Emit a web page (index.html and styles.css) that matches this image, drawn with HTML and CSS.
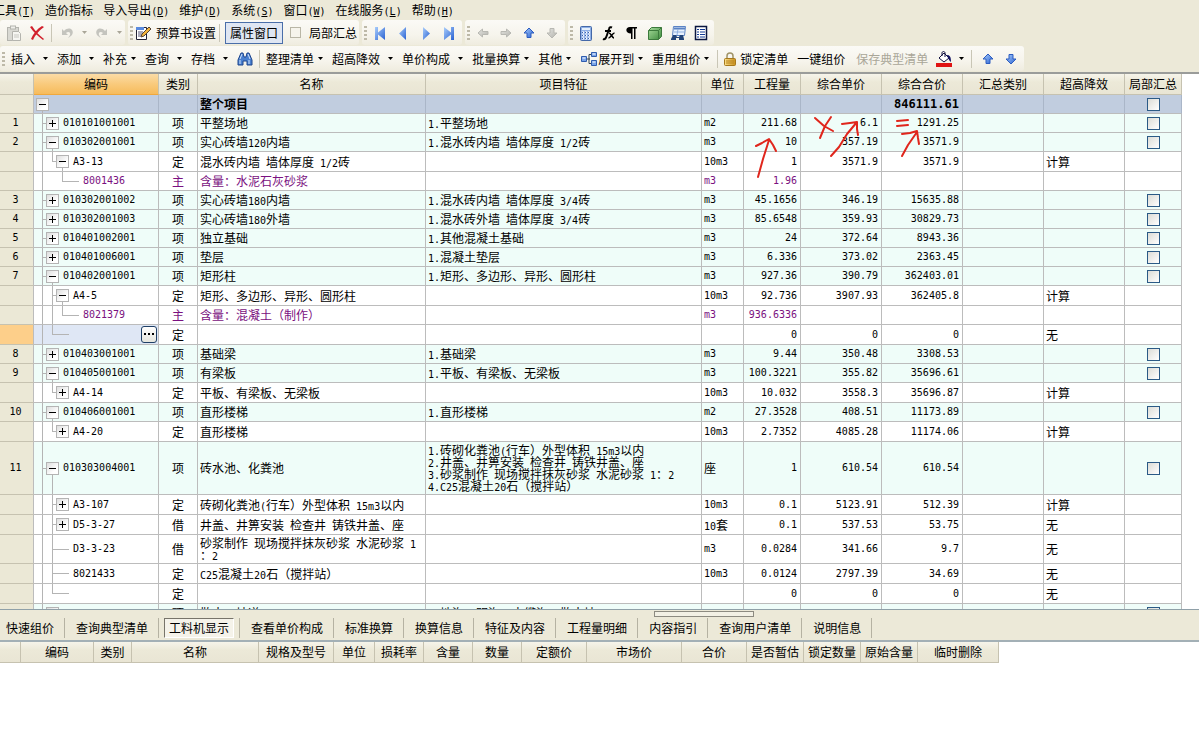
FILE: index.html
```html
<!DOCTYPE html>
<html lang="zh-CN">
<head>
<meta charset="utf-8">
<title>预算书</title>
<link rel="stylesheet" href="styles.css">
</head>
<body>
<svg class="defs" width="0" height="0" aria-hidden="true">
  <defs>
    <linearGradient id="blue" x1="0" y1="0" x2="1" y2="1"><stop offset="0" stop-color="#a9cdfb"/><stop offset="1" stop-color="#2a62d2"/></linearGradient>
    <linearGradient id="gray" x1="0" y1="0" x2="1" y2="1"><stop offset="0" stop-color="#e4e4e0"/><stop offset="1" stop-color="#b4b4ae"/></linearGradient>
    <linearGradient id="green" x1="0" y1="0" x2="1" y2="1"><stop offset="0" stop-color="#a8dc9c"/><stop offset="1" stop-color="#3c8a3c"/></linearGradient>
    <linearGradient id="gold" x1="0" y1="0" x2="1" y2="0"><stop offset="0" stop-color="#fbe08a"/><stop offset="1" stop-color="#c8901c"/></linearGradient>
    <symbol id="caret" viewBox="0 0 5 3"><path d="M0 0h5L2.500 3z"/></symbol>
    <symbol id="up" viewBox="0 0 16 16"><path d="M8 3l5 5h-3v4.500H6V8H3z"/></symbol>
    <symbol id="down" viewBox="0 0 16 16"><path d="M8 13l5-5h-3V3.500H6V8H3z"/></symbol>
    <symbol id="undo" viewBox="0 0 16 16"><path d="M3 4v6h6L7 8c2-2 5-1 4 2-.5 1-1 2-2 3 4-2 6-5 4-8-2-2-5-2-8 1z"/></symbol>
  </defs>
</svg>

<nav class="menu">
  <a href="#">工具<span class="n">(<u>T</u>)</span></a>
  <a href="#">造价指标</a>
  <a href="#">导入导出<span class="n">(<u>D</u>)</span></a>
  <a href="#">维护<span class="n">(<u>D</u>)</span></a>
  <a href="#">系统<span class="n">(<u>S</u>)</span></a>
  <a href="#">窗口<span class="n">(<u>W</u>)</span></a>
  <a href="#">在线服务<span class="n">(<u>L</u>)</span></a>
  <a href="#">帮助<span class="n">(<u>H</u>)</span></a>
</nav>

<div class="bars">
  <div class="bar">
    <div class="group lead">
      <button class="ib" aria-label="粘贴"><svg width="16" height="16" viewBox="0 0 16 16"><rect x="1.500" y="2.500" width="11" height="13" fill="#d9d9d3" stroke="#b4b4ae"/><rect x="4.500" y="1" width="5" height="3" fill="#efefea" stroke="#b4b4ae"/><path d="M6.500 6.500h6l2 2v7h-8z" fill="#f6f6f2" stroke="#b4b4ae"/><path d="M8 10h5M8 12h5" stroke="#c8c8c2"/></svg></button>
      <button class="ib" aria-label="删除"><svg width="16" height="16" viewBox="0 0 16 16"><path d="M1 2l2-1c3 5 7 9 12 13l-1 1C9 11 4 7 1 2zM13 1l2 1C11 5 6 10 4 15l-2-1C4 9 8 4 13 1z" fill="#d2202c"/></svg></button>
      <span class="sep"></span>
      <button class="ib" aria-label="撤销"><svg width="16" height="16" fill="#c4c4be"><use href="#undo"/></svg></button>
      <button class="ca dim" aria-label="撤销列表"><svg width="5" height="3"><use href="#caret"/></svg></button>
      <button class="ib" aria-label="重做"><svg class="flip" width="16" height="16" fill="#c4c4be"><use href="#undo"/></svg></button>
      <button class="ca dim" aria-label="重做列表"><svg width="5" height="3"><use href="#caret"/></svg></button>
    </div>
    <div class="group">
      <span class="grip"></span>
      <button class="tb"><svg width="18" height="16" viewBox="0 0 18 16"><path d="M2.500 2.500h10v12h-10z" fill="#fff" stroke="#223"/><path d="M2 2h8v3H2z" fill="#5a8ade"/><path d="M4 7h5M4 9h4M4 11h3" stroke="#557"/><path d="M15 2l2 2-7 7-3 1 1-3z" fill="#f2b33a" stroke="#543"/></svg><span>预算书设置</span></button>
      <span class="sep"></span>
      <button class="tb pressed">属性窗口</button>
      <label class="opt"><input type="checkbox" class="opt-box"><span>局部汇总</span></label>
    </div>
    <div class="group">
      <span class="grip"></span>
      <button class="ib" aria-label="首条"><svg width="16" height="16" viewBox="0 0 16 16" fill="url(#blue)"><path d="M3 2h3v5.500L13 2v13L6 9.500V15H3z"/></svg></button>
      <button class="ib" aria-label="上一条"><svg width="16" height="16" viewBox="0 0 16 16" fill="url(#blue)"><path d="M4 8.500L11 2v13z"/></svg></button>
      <button class="ib" aria-label="下一条"><svg width="16" height="16" viewBox="0 0 16 16" fill="url(#blue)"><path d="M5 2l7 6.500L5 15z"/></svg></button>
      <button class="ib" aria-label="末条"><svg width="16" height="16" viewBox="0 0 16 16" fill="url(#blue)"><path d="M13 2h-3v5.500L3 2v13l7-5.500V15h3z"/></svg></button>
    </div>
    <div class="group">
      <span class="grip"></span>
      <button class="ib" aria-label="左移"><svg width="16" height="16" viewBox="0 0 16 16" fill="url(#gray)" stroke="#b8b8b2"><path d="M3 8l4.500-4v2.500H13v3H7.500V12z"/></svg></button>
      <button class="ib" aria-label="右移"><svg width="16" height="16" viewBox="0 0 16 16" fill="url(#gray)" stroke="#b8b8b2"><path d="M13 8L8.500 4v2.500H3v3h5.500V12z"/></svg></button>
      <button class="ib" aria-label="上移"><svg width="16" height="16" fill="url(#blue)" stroke="#2c5cc0"><use href="#up"/></svg></button>
      <button class="ib" aria-label="下移"><svg width="16" height="16" fill="url(#gray)" stroke="#b8b8b2"><use href="#down"/></svg></button>
    </div>
    <div class="group">
      <span class="grip"></span>
      <button class="ib" aria-label="计算器"><svg width="16" height="16" viewBox="0 0 16 16"><rect x="2.500" y="1.500" width="11" height="14" rx="1" fill="#8fb0e6" stroke="#4468a8"/><path d="M4 3h8v2H4z" fill="#e4effc"/><path d="M4 7.500h8M4 10.500h8M4 13.500h8" stroke="#fff" stroke-width="2" stroke-dasharray="2 1"/><path d="M4 7.500h8M4 10.500h8M4 13.500h8" stroke="#3c62ac" stroke-dasharray="1 2"/></svg></button>
      <button class="ib" aria-label="函数"><svg width="16" height="16" viewBox="0 0 16 16" fill="none" stroke="#000"><path d="M2 14c2 1 3-1 4-4l2-6c.5-2 2-2 3-1.500M4 6h6" stroke-width="2"/><path d="M8 8c2 0 3 5 5 5M13.500 8c-2 0-4 5-6 5" stroke-width="1.500"/></svg></button>
      <button class="ib" aria-label="段落"><svg width="16" height="16" viewBox="0 0 16 16"><path d="M13 2v1.500h-1.500V14H10V3.500H8.500V14H7V8.500C1 8.500 1 2 6 2z"/></svg></button>
      <button class="ib" aria-label="立方体"><svg width="16" height="16" viewBox="0 0 16 16" stroke="#3c7a3c"><path d="M1.500 5.500l3-3h10v9l-3 3h-10z" fill="url(#green)"/><path d="M1.500 5.500h10v9M11.500 5.500l3-3" fill="none"/></svg></button>
      <button class="ib" aria-label="查找表"><svg width="16" height="16" viewBox="0 0 16 16"><path d="M3.500 1.500h12l-1 9h-12z" fill="#e8f1fd" stroke="#5b83c4"/><path d="M4 3.500h11" stroke="#5b83c4" stroke-width="2"/><path d="M4 7h10M8 4l-1 6" stroke="#8fb0e0"/><path d="M1 14l2-4h3l1 2h2l1-2h3l1 4v1H9v-2H6v2H1z" fill="#234478"/></svg></button>
      <button class="ib" aria-label="列表"><svg width="16" height="16" viewBox="0 0 16 16"><path d="M2.500 1.500h11v13h-11z" fill="#fff" stroke="#0a1640" stroke-width="1.500"/><path d="M4 4.500h2M4 7h2M4 9.500h2M4 12h2M7 4.500h5M7 7h5M7 9.500h5M7 12h5" stroke="#123a94"/></svg></button>
    </div>
  </div>

  <div class="bar">
    <div class="group wide">
      <span class="grip"></span>
      <button class="db far">插入<svg width="5" height="3"><use href="#caret"/></svg></button>
      <button class="db far">添加<svg width="5" height="3"><use href="#caret"/></svg></button>
      <button class="db">补充<svg width="5" height="3"><use href="#caret"/></svg></button>
      <button class="db far">查询<svg width="5" height="3"><use href="#caret"/></svg></button>
      <button class="db far">存档<svg width="5" height="3"><use href="#caret"/></svg></button>
      <button class="find" aria-label="查找"><svg width="16" height="16" viewBox="0 0 16 16" fill="#4a80d0" stroke="#1c448c"><path d="M1 9l3-7h2l1 4h2l1-4h2l3 7v5h-5v-4H6v4H1z"/><path d="M3 9v4M12 9v4M5 3L3 8M11 3l2 5" stroke="#cfe2fb"/></svg></button>
      <span class="sep"></span>
      <button class="db">整理清单<svg width="5" height="3"><use href="#caret"/></svg></button>
      <button class="db far">超高降效<svg width="5" height="3"><use href="#caret"/></svg></button>
      <button class="db far">单价构成<svg width="5" height="3"><use href="#caret"/></svg></button>
      <button class="db">批量换算<svg width="5" height="3"><use href="#caret"/></svg></button>
      <button class="db">其他<svg width="5" height="3"><use href="#caret"/></svg></button>
      <button class="db"><svg class="pic" width="18" height="16" viewBox="0 0 18 16"><path d="M6 8h4M9 3.500v9M9 3.500h2M9 12.500h2" stroke="#345" fill="none"/><g fill="#7aa4e8" stroke="#2f5cae"><path d="M1.500 5.500h5v5h-5z"/><path d="M11.500 1.500h5v4h-5z"/><path d="M11.500 9.500h5v5h-5z"/></g><path d="M2.500 7h3M12.500 3h3M12.500 11h3" stroke="#fff"/></svg>展开到<svg width="5" height="3"><use href="#caret"/></svg></button>
      <button class="db near">重用组价<svg width="5" height="3"><use href="#caret"/></svg></button>
      <span class="sep"></span>
      <button class="tb"><svg width="16" height="16" viewBox="0 0 16 16"><path d="M5 8V5c0-4 6-4 6 0v3" fill="none" stroke="#a09468" stroke-width="1.500"/><rect x="2.500" y="7.500" width="11" height="7" rx="1" fill="url(#gold)" stroke="#a6781c"/><path d="M4 10h8M4 12h8" stroke="#b98420"/></svg><span>锁定清单</span></button>
      <button class="tx">一键组价</button>
      <button class="tx" disabled>保存典型清单</button>
      <button class="db paint" aria-label="填充颜色"><svg class="pic" width="18" height="16" viewBox="0 0 18 16"><path d="M1 12h16v4H1z" fill="#e01414"/><path d="M4 7l5-5 5 5-5 4z" fill="#fff" stroke="#101040"/><path d="M7 5V2c0-2 3-2 3 0v4" fill="none" stroke="#101040"/><path d="M12 4c3 0 4 2 4 7-2-1-2-3-3-4z" fill="#101060"/></svg><svg width="5" height="3"><use href="#caret"/></svg></button>
      <span class="sep"></span>
      <button class="ib" aria-label="上移"><svg width="16" height="16" fill="url(#blue)" stroke="#2c5cc0"><use href="#up"/></svg></button>
      <button class="ib" aria-label="下移"><svg width="16" height="16" fill="url(#blue)" stroke="#2c5cc0"><use href="#down"/></svg></button>
    </div>
  </div>
</div>

<main class="sheet">
  <table class="grid">
    <colgroup><col class="w34"><col class="w125"><col class="w39"><col class="w228"><col><col class="w42"><col class="w57"><col class="w81"><col class="w81"><col class="w81"><col class="w81"><col class="w57"></colgroup>
    <thead>
      <tr><th></th><th class="hot">编码</th><th>类别</th><th>名称</th><th>项目特征</th><th>单位</th><th>工程量</th><th>综合单价</th><th>综合合价</th><th>汇总类别</th><th>超高降效</th><th>局部汇总</th></tr>
    </thead>
    <tbody>
      <tr class="total"><th></th><td class="code"><div class="tree"><button class="tw open" aria-label="折叠"></button></div></td><td></td><td>整个项目</td><td></td><td></td><td></td><td></td><td class="num">846111.61</td><td></td><td></td><td class="chk"><input type="checkbox" aria-label="局部汇总"></td></tr>
      <tr class="item"><th>1</th><td class="code"><div class="tree"><i class="tee"></i><button class="tw plus" aria-label="展开"></button><span>010101001001</span></div></td><td class="kind">项</td><td>平整场地</td><td><span class="n">1.</span>平整场地</td><td class="unit">m2</td><td class="num">211.68</td><td class="num">6.1</td><td class="num">1291.25</td><td></td><td></td><td class="chk"><input type="checkbox" aria-label="局部汇总"></td></tr>
      <tr class="item"><th>2</th><td class="code"><div class="tree"><i class="tee"></i><button class="tw open" aria-label="折叠"></button><span>010302001001</span></div></td><td class="kind">项</td><td>实心砖墙<span class="n">120</span>内墙</td><td><span class="n">1.</span>混水砖内墙&ensp;墙体厚度<span class="n"> 1/2</span>砖</td><td class="unit">m3</td><td class="num">10</td><td class="num">357.19</td><td class="num">3571.9</td><td></td><td></td><td class="chk"><input type="checkbox" aria-label="局部汇总"></td></tr>
      <tr class="norm"><th></th><td class="code"><div class="tree"><i class="bar-v"></i><i class="end"></i><button class="tw open" aria-label="折叠"></button><span>A3-13</span></div></td><td class="kind">定</td><td>混水砖内墙&ensp;墙体厚度<span class="n"> 1/2</span>砖</td><td></td><td class="unit">10m3</td><td class="num">1</td><td class="num">3571.9</td><td class="num">3571.9</td><td></td><td>计算</td><td></td></tr>
      <tr class="main"><th></th><td class="code"><div class="tree"><i class="bar-v"></i><i class="gap"></i><i class="end leaf"></i><span>8001436</span></div></td><td class="kind">主</td><td>含量<span class="c">：</span>水泥石灰砂浆</td><td></td><td class="unit">m3</td><td class="num">1.96</td><td></td><td></td><td></td><td></td><td></td></tr>
      <tr class="item"><th>3</th><td class="code"><div class="tree"><i class="tee"></i><button class="tw plus" aria-label="展开"></button><span>010302001002</span></div></td><td class="kind">项</td><td>实心砖墙<span class="n">180</span>内墙</td><td><span class="n">1.</span>混水砖内墙&ensp;墙体厚度<span class="n"> 3/4</span>砖</td><td class="unit">m3</td><td class="num">45.1656</td><td class="num">346.19</td><td class="num">15635.88</td><td></td><td></td><td class="chk"><input type="checkbox" aria-label="局部汇总"></td></tr>
      <tr class="item"><th>4</th><td class="code"><div class="tree"><i class="tee"></i><button class="tw plus" aria-label="展开"></button><span>010302001003</span></div></td><td class="kind">项</td><td>实心砖墙<span class="n">180</span>外墙</td><td><span class="n">1.</span>混水砖外墙&ensp;墙体厚度<span class="n"> 3/4</span>砖</td><td class="unit">m3</td><td class="num">85.6548</td><td class="num">359.93</td><td class="num">30829.73</td><td></td><td></td><td class="chk"><input type="checkbox" aria-label="局部汇总"></td></tr>
      <tr class="item"><th>5</th><td class="code"><div class="tree"><i class="tee"></i><button class="tw plus" aria-label="展开"></button><span>010401002001</span></div></td><td class="kind">项</td><td>独立基础</td><td><span class="n">1.</span>其他混凝土基础</td><td class="unit">m3</td><td class="num">24</td><td class="num">372.64</td><td class="num">8943.36</td><td></td><td></td><td class="chk"><input type="checkbox" aria-label="局部汇总"></td></tr>
      <tr class="item"><th>6</th><td class="code"><div class="tree"><i class="tee"></i><button class="tw plus" aria-label="展开"></button><span>010401006001</span></div></td><td class="kind">项</td><td>垫层</td><td><span class="n">1.</span>混凝土垫层</td><td class="unit">m3</td><td class="num">6.336</td><td class="num">373.02</td><td class="num">2363.45</td><td></td><td></td><td class="chk"><input type="checkbox" aria-label="局部汇总"></td></tr>
      <tr class="item"><th>7</th><td class="code"><div class="tree"><i class="tee"></i><button class="tw open" aria-label="折叠"></button><span>010402001001</span></div></td><td class="kind">项</td><td>矩形柱</td><td><span class="n">1.</span>矩形、多边形、异形、圆形柱</td><td class="unit">m3</td><td class="num">927.36</td><td class="num">390.79</td><td class="num">362403.01</td><td></td><td></td><td class="chk"><input type="checkbox" aria-label="局部汇总"></td></tr>
      <tr class="norm"><th></th><td class="code"><div class="tree"><i class="bar-v"></i><i class="tee"></i><button class="tw open" aria-label="折叠"></button><span>A4-5</span></div></td><td class="kind">定</td><td>矩形、多边形、异形、圆形柱</td><td></td><td class="unit">10m3</td><td class="num">92.736</td><td class="num">3907.93</td><td class="num">362405.8</td><td></td><td>计算</td><td></td></tr>
      <tr class="main"><th></th><td class="code"><div class="tree"><i class="bar-v"></i><i class="bar-v"></i><i class="end leaf"></i><span>8021379</span></div></td><td class="kind">主</td><td>含量<span class="c">：</span>混凝土（制作）</td><td></td><td class="unit">m3</td><td class="num">936.6336</td><td></td><td></td><td></td><td></td><td></td></tr>
      <tr class="norm current"><th></th><td class="code"><div class="tree"><i class="bar-v"></i><i class="end leaf"></i><button class="more" aria-label="选择编码"><svg width="11" height="3"><path d="M0 0h2v2H0zM4 0h2v2H4zM8 0h2v2H8z"/></svg></button></div></td><td class="kind">定</td><td></td><td></td><td></td><td class="num">0</td><td class="num">0</td><td class="num">0</td><td></td><td>无</td><td></td></tr>
      <tr class="item"><th>8</th><td class="code"><div class="tree"><i class="tee"></i><button class="tw plus" aria-label="展开"></button><span>010403001001</span></div></td><td class="kind">项</td><td>基础梁</td><td><span class="n">1.</span>基础梁</td><td class="unit">m3</td><td class="num">9.44</td><td class="num">350.48</td><td class="num">3308.53</td><td></td><td></td><td class="chk"><input type="checkbox" aria-label="局部汇总"></td></tr>
      <tr class="item"><th>9</th><td class="code"><div class="tree"><i class="tee"></i><button class="tw open" aria-label="折叠"></button><span>010405001001</span></div></td><td class="kind">项</td><td>有梁板</td><td><span class="n">1.</span>平板、有梁板、无梁板</td><td class="unit">m3</td><td class="num">100.3221</td><td class="num">355.82</td><td class="num">35696.61</td><td></td><td></td><td class="chk"><input type="checkbox" aria-label="局部汇总"></td></tr>
      <tr class="norm"><th></th><td class="code"><div class="tree"><i class="bar-v"></i><i class="end"></i><button class="tw plus" aria-label="展开"></button><span>A4-14</span></div></td><td class="kind">定</td><td>平板、有梁板、无梁板</td><td></td><td class="unit">10m3</td><td class="num">10.032</td><td class="num">3558.3</td><td class="num">35696.87</td><td></td><td>计算</td><td></td></tr>
      <tr class="item"><th>10</th><td class="code"><div class="tree"><i class="tee"></i><button class="tw open" aria-label="折叠"></button><span>010406001001</span></div></td><td class="kind">项</td><td>直形楼梯</td><td><span class="n">1.</span>直形楼梯</td><td class="unit">m2</td><td class="num">27.3528</td><td class="num">408.51</td><td class="num">11173.89</td><td></td><td></td><td class="chk"><input type="checkbox" aria-label="局部汇总"></td></tr>
      <tr class="norm"><th></th><td class="code"><div class="tree"><i class="bar-v"></i><i class="end"></i><button class="tw plus" aria-label="展开"></button><span>A4-20</span></div></td><td class="kind">定</td><td>直形楼梯</td><td></td><td class="unit">10m3</td><td class="num">2.7352</td><td class="num">4085.28</td><td class="num">11174.06</td><td></td><td>计算</td><td></td></tr>
      <tr class="item four"><th>11</th><td class="code"><div class="tree"><i class="tee"></i><button class="tw open" aria-label="折叠"></button><span>010303004001</span></div></td><td class="kind">项</td><td>砖水池、化粪池</td><td><span class="n">1.</span>砖砌化粪池<span class="n">(</span>行车）外型体积<span class="n"> 15m3</span>以内<br><span class="n">2.</span>井盖、井箅安装&ensp;检查井&ensp;铸铁井盖、座<br><span class="n">3.</span>砂浆制作&ensp;现场搅拌抹灰砂浆&ensp;水泥砂浆<span class="n"> 1</span><span class="c">：</span><span class="n">2</span><br><span class="n">4.C25</span>混凝土<span class="n">20</span>石（搅拌站）</td><td>座</td><td class="num">1</td><td class="num">610.54</td><td class="num">610.54</td><td></td><td></td><td class="chk"><input type="checkbox" aria-label="局部汇总"></td></tr>
      <tr class="norm"><th></th><td class="code"><div class="tree"><i class="bar-v"></i><i class="tee"></i><button class="tw plus" aria-label="展开"></button><span>A3-107</span></div></td><td class="kind">定</td><td>砖砌化粪池<span class="n">(</span>行车）外型体积<span class="n"> 15m3</span>以内</td><td></td><td class="unit">10m3</td><td class="num">0.1</td><td class="num">5123.91</td><td class="num">512.39</td><td></td><td>计算</td><td></td></tr>
      <tr class="norm"><th></th><td class="code"><div class="tree"><i class="bar-v"></i><i class="tee"></i><button class="tw plus" aria-label="展开"></button><span>D5-3-27</span></div></td><td class="kind">借</td><td>井盖、井箅安装&ensp;检查井&ensp;铸铁井盖、座</td><td></td><td><span class="n">10</span>套</td><td class="num">0.1</td><td class="num">537.53</td><td class="num">53.75</td><td></td><td>无</td><td></td></tr>
      <tr class="norm two"><th></th><td class="code"><div class="tree"><i class="bar-v"></i><i class="tee leaf"></i><span>D3-3-23</span></div></td><td class="kind">借</td><td>砂浆制作&ensp;现场搅拌抹灰砂浆&ensp;水泥砂浆<span class="n"> 1</span><br><span class="c">：</span><span class="n">2</span></td><td></td><td class="unit">m3</td><td class="num">0.0284</td><td class="num">341.66</td><td class="num">9.7</td><td></td><td>无</td><td></td></tr>
      <tr class="norm"><th></th><td class="code"><div class="tree"><i class="bar-v"></i><i class="tee leaf"></i><span>8021433</span></div></td><td class="kind">定</td><td><span class="n">C25</span>混凝土<span class="n">20</span>石（搅拌站）</td><td></td><td class="unit">10m3</td><td class="num">0.0124</td><td class="num">2797.39</td><td class="num">34.69</td><td></td><td>无</td><td></td></tr>
      <tr class="norm"><th></th><td class="code"><div class="tree"><i class="bar-v"></i><i class="end leaf"></i></div></td><td class="kind">定</td><td></td><td></td><td></td><td class="num">0</td><td class="num">0</td><td class="num">0</td><td></td><td>无</td><td></td></tr>
      <tr class="item"><th></th><td class="code"><div class="tree"><i class="tee"></i><button class="tw open" aria-label="折叠"></button></div></td><td class="kind">项</td><td>散水、坡道</td><td><span class="n">1.</span>地沟、明沟、电缆沟、散水坡</td><td></td><td></td><td></td><td></td><td></td><td></td><td class="chk"><input type="checkbox" aria-label="局部汇总"></td></tr>
    </tbody>
  </table>
  <svg class="marks" width="180" height="70" viewBox="750 114 180 70" fill="none" stroke="#e0261c" stroke-width="2" stroke-linecap="round" stroke-linejoin="round" aria-hidden="true">
    <path d="M758 177l5-18 6-19M756 146l6-3 7-4 4 6 3 6"/>
    <path d="M815 118l9 8 9 5M831 117l-6 9-5 12"/>
    <path d="M831 156l8-9 8-13 10-12M842 124l8-1 7-1v7l1 6"/>
    <path d="M897 121l11-1M897 126l11-1"/>
    <path d="M902 156l6-11 9-13M902 134l8-1 7-2 1 7 1 6"/>
  </svg>
</main>

<section class="detail">
  <div class="splitter"><span></span></div>
  <div class="tabs">
    <button>快速组价</button><button>查询典型清单</button><button class="on"><span>工料机显示</span></button><button>查看单价构成</button><button>标准换算</button><button>换算信息</button><button>特征及内容</button><button>工程量明细</button><button>内容指引</button><button>查询用户清单</button><button>说明信息</button>
  </div>
  <table class="parts">
    <colgroup><col class="w21"><col class="w73"><col class="w38"><col class="w127"><col class="w75"><col class="w41"><col class="w49"><col class="w49"><col class="w49"><col class="w65"><col class="w95"><col class="w65"><col class="w57"><col class="w57"><col class="w57"><col class="w81"></colgroup>
    <thead><tr><th></th><th>编码</th><th>类别</th><th>名称</th><th>规格及型号</th><th>单位</th><th>损耗率</th><th>含量</th><th>数量</th><th>定额价</th><th>市场价</th><th>合价</th><th>是否暂估</th><th>锁定数量</th><th>原始含量</th><th>临时删除</th></tr></thead>
  </table>
</section>
</body>
</html>
```
FILE: styles.css
```css
* { box-sizing: border-box; }

body {
  margin: 0;
  height: 100vh;
  display: flex;
  flex-direction: column;
  overflow: hidden;
  background: #fff;
  color: #000;
  font: 12px/12px "Noto Sans CJK SC", sans-serif;
}

button {
  margin: 0;
  padding: 0;
  border: 0;
  background: none;
  color: inherit;
  font: inherit;
  white-space: nowrap;
}

button:disabled { color: #a9a698; }
svg { display: block; flex: none; }
.defs { position: absolute; }

.n, .code, .unit, .num, .grid tbody th {
  font-family: "DejaVu Sans Mono", monospace;
  font-size: 10px;
  font-weight: normal;
}

.n { white-space: pre; line-height: 0; }
.c { font-family: "Noto Sans CJK TC", sans-serif; line-height: 0; }

/* menu */
.menu {
  display: flex;
  gap: 10px;
  height: 20px;
  flex: none;
  align-items: center;
  margin-left: -7px;
  background: #ece9d8;
}

.menu a { color: #000; text-decoration: none; white-space: nowrap; }

/* toolbars */
.bars {
  background: #ece9d8;
  border-bottom: 2px solid #9a9c9a;
  flex: none;
}

.bar { display: flex; gap: 3px; height: 26px; }

.group {
  display: flex;
  align-items: center;
  height: 25px;
  padding-right: 2px;
  border-radius: 3px;
  background: linear-gradient(#fbfaf6, #f6f4ec 60%, #efecdf);
}

.group.lead { padding: 0 0 0 2px; }

.grip {
  width: 3px;
  height: 14px;
  margin: 0 1px 0 2px;
  background: repeating-linear-gradient(#bdb9a8 0 2px, transparent 2px 4px);
}

.sep { width: 1px; height: 18px; margin: 0 3px; background: #c9c6b6; }
.wide .sep { margin: 0 4px; }
.wide .find + .sep { margin: 0 6px; }

.ib { display: flex; justify-content: center; width: 23px; }
.ca { display: flex; justify-content: center; width: 12px; }
.dim { fill: #a9a698; }
.flip { transform: scaleX(-1); }
.tb { display: flex; align-items: center; gap: 4px; }
.wide .tb { gap: 2px; }

.pressed {
  height: 22px;
  margin-left: 2px;
  padding: 0 4px;
  border: 1px solid #4a6ea9;
  background: #dfe6f3;
}

.opt { display: flex; align-items: center; gap: 8px; padding-left: 7px; white-space: nowrap; }

.opt-box {
  appearance: none;
  width: 11px;
  height: 11px;
  margin: 0;
  border: 1px solid #b9b6a6;
  background: #f6f4ec;
}

.db { display: flex; align-items: center; }
.db svg:last-child { margin: 0 9px 0 4px; }
.db.far svg:last-child { margin: 0 9px 0 8px; }
.db.near svg:last-child { margin: 0 4px; }
.db.paint svg:last-child { margin: 0 3px 0 6px; }
.tx { margin-left: 9px; }
.tx:disabled { margin: 0 7px 0 11px; }
.wide .grip { margin-right: 6px; }

/* main grid */
.sheet {
  position: relative;
  flex: 536 1 0;
  min-height: 0;
  overflow: hidden;
  padding-right: 17px;
}

.grid, .parts { border-collapse: separate; border-spacing: 0; table-layout: fixed; }
.grid { width: 100%; }
.parts { width: 0; }

.w21 { width: 21px; }
.w34 { width: 34px; }
.w38 { width: 38px; }
.w39 { width: 39px; }
.w41 { width: 41px; }
.w42 { width: 42px; }
.w49 { width: 49px; }
.w57 { width: 57px; }
.w65 { width: 65px; }
.w73 { width: 73px; }
.w75 { width: 75px; }
.w81 { width: 81px; }
.w95 { width: 95px; }
.w125 { width: 125px; }
.w127 { width: 127px; }
.w228 { width: 228px; }

.grid th, .grid td {
  padding: 0 2px;
  border-right: 1px solid #bcbcbc;
  border-bottom: 1px solid #bcbcbc;
  vertical-align: middle;
  white-space: nowrap;
  overflow: hidden;
}

thead th {
  height: 21px;
  font-weight: normal;
}

.grid thead th, .parts th {
  padding: 0;
  border-right: 1px solid #c6c2b0;
  border-bottom: 1px solid #c6c2b0;
  background: linear-gradient(#f6f4ea, #ece9d8 40%, #e9e5d4);
  white-space: nowrap;
}

.grid thead .hot {
  border-bottom-color: #f0a83c;
  background: linear-gradient(#fbdca6, #f9ca7c 50%, #f6bb5c);
}

.grid tbody th {
  padding-right: 4px;
  border-bottom-color: #c6c2b0;
  background: #ebe8d6;
  text-align: center;
}

.item td, .main td { height: 19px; }
.total td { height: 19px; background: #c1cddf; font-weight: bold; }
.norm td { height: 20px; }
.item.four td { height: 53px; }
.norm.two td { height: 29px; }
.item td { background: #effdf9; }
.main td { color: #7a1080; }
.total td { border-right-color: #aab6c8; }
.grid .total .num { font-size: 12px; font-weight: bold; }

.grid .kind { text-align: center; }
.grid .num { text-align: right; padding-right: 3px; }
.grid .chk { text-align: center; padding: 0; }

.chk input {
  appearance: none;
  display: block;
  width: 13px;
  height: 13px;
  margin: 0 auto;
  border: 1px solid #2b5a86;
  background: linear-gradient(135deg, #dcdcd6, #fff);
}

/* tree column */
.grid .code { padding: 0 0 0 8px; }
.grid tr:first-child .code { padding-left: 2px; }
.tree { display: flex; align-items: center; height: 100%; overflow: hidden; }
.tree span { margin-left: 4px; }

.tree i { width: 4px; align-self: stretch; --line: linear-gradient(#b4b4b4, #b4b4b4); }
.tree .bar-v, .tree .gap { width: 10px; }
.tree .leaf { width: 17px; }
.bar-v { background: var(--line) 0 0 / 1px 100% no-repeat; }
.tee { background: var(--line) 0 0 / 1px 100% no-repeat, var(--line) 0 50% / 100% 1px no-repeat; }
.end { background: var(--line) 0 0 / 1px 50% no-repeat, var(--line) 0 50% / 100% 1px no-repeat; }

.tw {
  position: relative;
  width: 13px;
  height: 13px;
  border: 1px solid #b4b4b4;
  background:
    linear-gradient(#000, #000) 50% 50% / 7px 1px no-repeat,
    linear-gradient(135deg, #dedede, #fff 70%);
}

.tw.plus {
  background:
    linear-gradient(#000, #000) 50% 50% / 7px 1px no-repeat,
    linear-gradient(#000, #000) 50% 50% / 1px 7px no-repeat,
    linear-gradient(135deg, #dedede, #fff 70%);
}

.tw.open::after {
  content: "";
  position: absolute;
  top: 12px;
  left: 5px;
  width: 1px;
  height: 30px;
  background: #b4b4b4;
}

.current td.code { background: #dfe7f5; }
.grid .current th { background: #fdcf8a; }

.more {
  display: flex;
  align-items: center;
  justify-content: center;
  width: 16px;
  height: 17px;
  margin: 0 1px 0 auto;
  border: 1px solid #1f3f66;
  border-radius: 3px;
  background: linear-gradient(#fff, #e6e6de);
}

.marks { position: absolute; top: 40px; right: 269px; }

/* lower panel */
.detail { flex: 125 1 0; min-height: 0; overflow: hidden; border-top: 1px solid #8fa0a8; }
.splitter { display: flex; justify-content: center; padding: 1px 0 0 208px; background: #ece9d8; }
.splitter span { width: 100px; height: 6px; border: 1px solid #8c8a80; background: #f2f0e4; }

.tabs {
  display: flex;
  align-items: center;
  height: 25px;
  padding-bottom: 2px;
  background: #ece9d8;
  border-bottom: 2px solid #a3b0b6;
}

.tabs button { height: 20px; padding: 0 10px 0 11px; border-right: 1px solid #b5b2a2; }
.tabs button:first-child { padding-left: 6px; }
.tabs .on { padding: 0 5px; }

.on span {
  display: block;
  padding: 3px 4px;
  border: 1px solid;
  border-color: #77746a #fff #fff #77746a;
  background: #f5f3ea;
}
```
